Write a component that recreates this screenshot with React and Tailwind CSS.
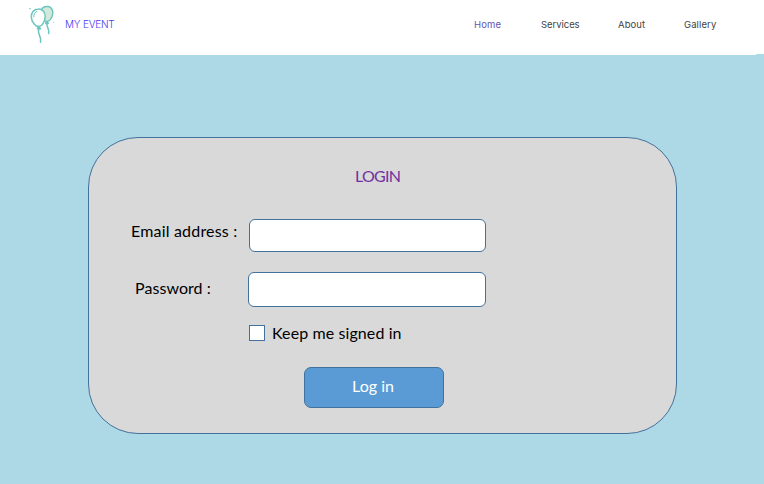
function BalloonLogo() {
  return (
    <svg className="h-[44px] w-[36px]" viewBox="0 0 36 44" fill="none" stroke="#6cc5bf" strokeWidth="1.5" strokeLinecap="round" strokeLinejoin="round">
      <path d="M18 6.5C19.5 4.8 22 4.1 24.5 4.6C28 5.4 29.4 9 28.5 12.8C27.7 16.4 25.2 19.5 22.5 19.5C20.6 19.4 18.7 18 17.7 16Z" fill="#d3e9dc" />
      <path d="M22.5 19.8L21.7 21.5H24.2L23.1 19.8M23 21.8C22.2 25 25.8 27 24.6 31.5" />
      <path d="M14 7C18.2 6.7 21.3 10.2 21.2 14.5C21 19.5 18 24.4 15 24.6C11.5 24.7 7.6 20 7.3 15.2C7 10.8 9.8 7.2 14 7Z" fill="#fff" />
      <path d="M14.5 24.9L13.4 26.8H16.4L15.3 24.9M14.8 27C12.8 32 18 34 16.5 40.2" />
      <path d="M9.8 15C9.6 12 11 10.2 13 9.5" strokeWidth="1" />
      <path d="M5.5 6.7H6.5M29.2 20.5H29.6" strokeWidth="1.2" opacity=".65" />
    </svg>
  );
}

function NavLink({ label, className }) {
  return <a href="#" className={`whitespace-nowrap ${className}`}>{label}</a>;
}

export default function App() {
  return (
    <div className="flex h-[484px] w-[764px] flex-col overflow-hidden bg-[#add8e6] font-['Lato','Open_Sans',sans-serif]">
      <header className="flex h-[55px] shrink-0 items-start">
        <div className="flex h-[55px] w-[756px] items-start bg-white pl-6 pt-0.5">
          <BalloonLogo />
          <span className="ml-[5px] mt-[14px] w-[60px] whitespace-nowrap font-['Inter',sans-serif] text-[10px] font-light leading-4 tracking-[-0.2px] text-[#4338f5]">MY EVENT</span>
          <nav className="mt-[15px] flex pl-[349px] font-['Inter',sans-serif] text-[9.5px] leading-4 text-[#444]">
            <NavLink label="Home" className="w-[67px] tracking-[0.1px] text-[#6355b5]" />
            <NavLink label="Services" className="w-[77px] tracking-[-0.05px]" />
            <NavLink label="About" className="w-[66px] tracking-[0.1px]" />
            <NavLink label="Gallery" className="w-[50px] tracking-[0.1px]" />
          </nav>
        </div>
        <div className="h-[54px] w-2 bg-white" />
      </header>
      <main className="pl-[88px] pt-[82px]">
        <form className="flex h-[297px] w-[589px] flex-col rounded-[50px] border border-[#41719c] bg-[#d9d9d9] text-base leading-5 text-black">
          <h1 className="ml-[266px] mt-[28px] h-[53px] tracking-[-0.75px] text-[#7030a0]"><span>LOGIN</span></h1>
          <div className="flex h-[53px] items-start">
            <label htmlFor="email" className="ml-[42px] mt-[2px] w-[118px] whitespace-nowrap tracking-[0.19px]">Email address :</label>
            <input id="email" type="email" className="h-[33px] w-[237px] rounded-[6px] border border-[#41719c] bg-white px-2" />
          </div>
          <div className="flex h-[53px] items-start">
            <label htmlFor="password" className="ml-[46px] mt-[6px] w-[113px] whitespace-nowrap tracking-[0.06px]">Password :</label>
            <input id="password" type="password" className="h-[35px] w-[238px] rounded-[6px] border border-[#41719c] bg-white px-2" />
          </div>
          <label className="ml-[160px] flex h-[42px] items-start">
            <input type="checkbox" className="size-4 appearance-none border border-[#41719c] bg-white" />
            <span className="ml-[7px] -mt-0.5 whitespace-nowrap tracking-[0.1px]">Keep me signed in</span>
          </label>
          <button type="button" className="ml-[215px] h-[41px] w-[140px] shrink-0 rounded-[7px] border border-[#41719c] bg-[#5b9bd5] pb-1 pr-0.5 pl-0 text-white">Log in</button>
        </form>
      </main>
    </div>
  );
}
